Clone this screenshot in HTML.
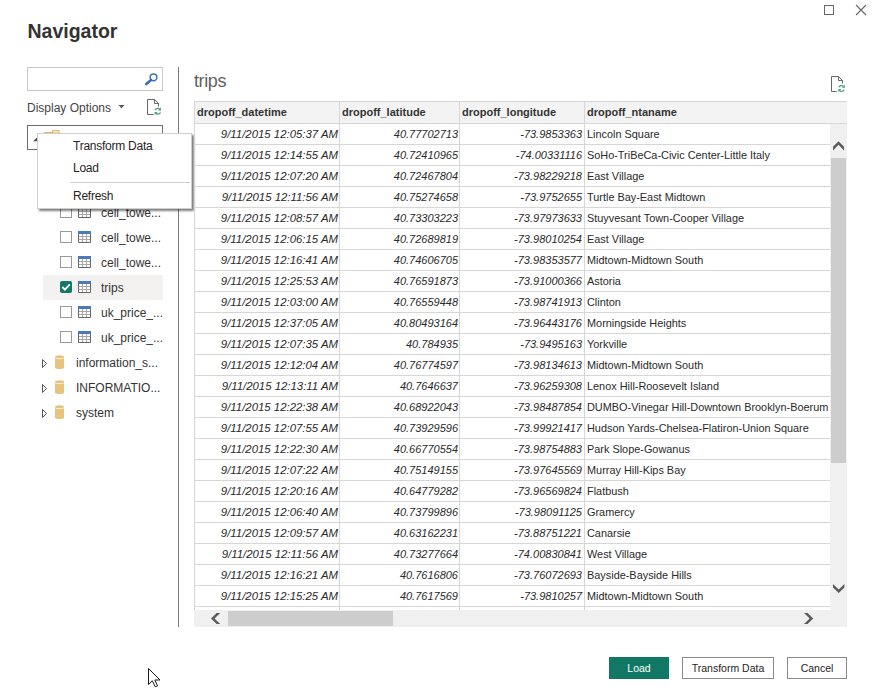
<!DOCTYPE html>
<html><head><meta charset="utf-8">
<style>
*{box-sizing:border-box;margin:0;padding:0}
html,body{width:873px;height:691px;overflow:hidden;background:#fff}
body{position:relative;font-family:"Liberation Sans",sans-serif;color:#252423}
.a{position:absolute;white-space:nowrap}
.t{position:absolute;white-space:nowrap;line-height:16px;height:16px}
/* table */
.hdr{position:absolute;left:194px;top:101px;width:653px;height:23px;background:#f3f3f3;border-top:1px solid #d6d6d6;border-bottom:1px solid #d6d6d6;border-left:1px solid #d6d6d6}
.hdr span{position:absolute;top:3px;font-weight:bold;font-size:11px;line-height:14px;color:#333}
.vl{position:absolute;top:101px;width:1px;height:509px;background:#d6d6d6}
.hl{position:absolute;left:194px;width:636px;height:1px;background:#d6d6d6}
.r{position:absolute;left:194px;width:636px;height:21px;font-size:11.4px;line-height:14px;color:#2a2a2a}
.r span{position:absolute;top:3px;white-space:nowrap}
.c1{right:493px;font-style:italic}
.c2{right:373px;font-style:italic;font-size:11px}
.c3{right:249px;font-style:italic;font-size:11px}
.c4{left:392px;font-size:10.9px}
/* tree */
.tr{position:absolute;font-size:12px;line-height:16px;color:#333;white-space:nowrap}
.cb{position:absolute;width:12px;height:12px;border:1px solid #9a9a9a;background:#fff}
.btn{position:absolute;top:657px;height:22px;font-size:10.5px;line-height:20px;text-align:center;border:1px solid #8a8a8a;background:#fff;color:#252423}
</style></head><body>

<!-- title -->
<div class="a" style="left:27.5px;top:20.5px;font-size:19.5px;line-height:20px;font-weight:bold;color:#333">Navigator</div>

<!-- window controls -->
<svg class="a" style="left:820px;top:0px" width="53" height="22" viewBox="820 0 53 22">
<rect x="824.5" y="5.5" width="9" height="9" fill="none" stroke="#666" stroke-width="1"/>
<path d="M856 5 L866 15 M866 5 L856 15" stroke="#666" stroke-width="1.1" fill="none"/>
</svg>

<!-- search box -->
<div class="a" style="left:27px;top:67px;width:136px;height:24px;border:1px solid #c8c8c8"></div>
<svg class="a" style="left:140px;top:70px" width="20" height="18" viewBox="140 70 20 18">
<circle cx="153.5" cy="77.3" r="3.4" fill="none" stroke="#3a70b3" stroke-width="1.5"/>
<path d="M151 80 L146.3 84" stroke="#3a6db0" stroke-width="2.6" stroke-linecap="round"/>
</svg>

<!-- display options -->
<div class="t" style="left:27px;top:100px;font-size:12px;color:#444">Display Options</div>
<svg class="a" style="left:116px;top:102px" width="10" height="8" viewBox="116 102 10 8">
<path d="M118.5 105 H124.5 L121.5 108.2 Z" fill="#555"/>
</svg>

<!-- doc refresh icon left -->
<svg class="a" style="left:145px;top:97px" width="20" height="20" viewBox="145 97 20 20">
<path d="M153.5 114.5 H147.5 V99.5 H154.5 L158.5 103.5 V106.5 M154.5 99.5 V103.5 H158.5" fill="none" stroke="#666" stroke-width="1"/>
<path d="M155 110 C156 108.3 158.5 107.8 160 109.2" fill="none" stroke="#459d7e" stroke-width="1.2"/>
<path d="M161 107.6 V110.6 H158 Z" fill="#459d7e"/>
<path d="M160.6 112.5 C159.6 114.2 157.1 114.7 155.6 113.3" fill="none" stroke="#459d7e" stroke-width="1.2"/>
<path d="M154.6 114.9 V111.9 H157.6 Z" fill="#459d7e"/>
</svg>

<!-- divider -->
<div class="a" style="left:178px;top:67px;width:1px;height:560px;background:#7a7a7a"></div>

<!-- tree -->
<div class="a" style="left:27px;top:125px;width:136px;height:25px;border:1px solid #6d6d6d"></div>
<svg class="a" style="left:30px;top:127px" width="32" height="22" viewBox="30 127 32 22">
<path d="M37.2 137.3 V141.2 H33.3 Z" fill="#444"/>
<path d="M44.5 140 V132.5 H52.5" fill="none" stroke="#e3b463" stroke-width="1"/><rect x="52.5" y="130.5" width="6.5" height="2.5" fill="#fbeed4" stroke="#e3b463" stroke-width="1"/>
</svg>

<!-- tree rows with checkboxes -->
<div class="a" style="left:43px;top:275px;width:120px;height:25px;background:#f3f2f1"></div>

<div class="cb" style="left:60px;top:206px"></div>
<div class="cb" style="left:60px;top:231px"></div>
<div class="cb" style="left:60px;top:256px"></div>
<div class="a" style="left:60px;top:281px;width:12px;height:12px;border-radius:2px;background:#117865"></div>
<svg class="a" style="left:60px;top:281px" width="12" height="12" viewBox="0 0 12 12"><path d="M2.3 6 L4.9 8.6 L9.8 3.4" fill="none" stroke="#fff" stroke-width="1.8"/></svg>
<div class="cb" style="left:60px;top:306px"></div>
<div class="cb" style="left:60px;top:331px"></div>

<svg class="a" style="left:0;top:0" width="180" height="440" viewBox="0 0 180 440">
<defs>
<g id="tbl">
<rect x="0" y="0" width="13" height="12" fill="#fff"/>
<rect x="0" y="0" width="13" height="3" fill="#4a7ab8"/>
<path d="M0.5 3 V11.5 H12.5 V3" fill="none" stroke="#666" stroke-width="1"/>
<path d="M4.5 3 V11 M8.5 3 V11 M1 5.5 H12 M1 8.5 H12" fill="none" stroke="#a8a8a8" stroke-width="1"/>
</g>
<g id="db">
<ellipse cx="4.5" cy="1.5" rx="4.5" ry="1.5" fill="#e6c37f"/><path d="M0 2.9 C1.5 4.3 7.5 4.3 9 2.9 V12.5 C9 14.3 0 14.3 0 12.5 Z" fill="#e6c37f"/>
</g>
<g id="exp"><path d="M0.5 0.5 L4.5 4.5 L0.5 8.5 Z" fill="#fff" stroke="#555" stroke-width="1"/></g>
</defs>
<use href="#tbl" x="78" y="206"/>
<use href="#tbl" x="78" y="231"/>
<use href="#tbl" x="78" y="256"/>
<use href="#tbl" x="78" y="281"/>
<use href="#tbl" x="78" y="306"/>
<use href="#tbl" x="78" y="331"/>
<use href="#exp" x="42" y="359"/>
<use href="#exp" x="42" y="384"/>
<use href="#exp" x="42" y="409"/>
<use href="#db" x="55" y="355.2"/>
<use href="#db" x="55" y="380.2"/>
<use href="#db" x="55" y="405.2"/>
</svg>

<div class="tr" style="left:101px;top:205px">cell_towe...</div>
<div class="tr" style="left:101px;top:230px">cell_towe...</div>
<div class="tr" style="left:101px;top:255px">cell_towe...</div>
<div class="tr" style="left:101px;top:280px">trips</div>
<div class="tr" style="left:101px;top:305px">uk_price_...</div>
<div class="tr" style="left:101px;top:330px">uk_price_...</div>
<div class="tr" style="left:76px;top:355px">information_s...</div>
<div class="tr" style="left:76px;top:380px">INFORMATIO...</div>
<div class="tr" style="left:76px;top:405px">system</div>

<!-- context menu -->
<div class="a" style="left:37px;top:133px;width:155px;height:76px;background:#fff;border:1px solid #cfcfcf;box-shadow:2px 2px 2px rgba(0,0,0,0.5)">
</div>
<div class="tr" style="left:73px;top:138px;letter-spacing:-0.25px;color:#252423">Transform Data</div>
<div class="tr" style="left:73px;top:160px;letter-spacing:-0.25px;color:#252423">Load</div>
<div class="a" style="left:70px;top:182px;width:120px;height:1px;background:#d0d0d0"></div>
<div class="tr" style="left:73px;top:188px;letter-spacing:-0.25px;color:#252423">Refresh</div>

<!-- right title -->
<div class="a" style="left:194px;top:71px;font-size:18px;line-height:20px;letter-spacing:-0.4px;color:#606060">trips</div>
<svg class="a" style="left:829px;top:74px" width="20" height="20" viewBox="829 74 20 20">
<path d="M836.7 91.5 H831.5 V76.5 H838.5 L842.5 80.5 V83.5 M838.5 76.5 V80.5 H842.5" fill="none" stroke="#666" stroke-width="1"/>
<path d="M838.8 87.2 C839.8 85.5 842.3 85 843.8 86.4" fill="none" stroke="#459d7e" stroke-width="1.2"/>
<path d="M844.8 84.8 V87.8 H841.8 Z" fill="#459d7e"/>
<path d="M844.4 89.7 C843.4 91.4 840.9 91.9 839.4 90.5" fill="none" stroke="#459d7e" stroke-width="1.2"/>
<path d="M838.4 92.1 V89.1 H841.4 Z" fill="#459d7e"/>
</svg>

<!-- table -->
<div class="hdr">
<span style="left:2px">dropoff_datetime</span>
<span style="left:147px">dropoff_latitude</span>
<span style="left:267px">dropoff_longitude</span>
<span style="left:392px">dropoff_ntaname</span>
</div>
<div class="a" style="left:194px;top:101px;width:1px;height:509px;background:#d6d6d6"></div>
<div class="vl" style="left:339px"></div>
<div class="vl" style="left:459px"></div>
<div class="vl" style="left:584px"></div>
<div class="hl" style="top:144px"></div>
<div class="hl" style="top:165px"></div>
<div class="hl" style="top:186px"></div>
<div class="hl" style="top:207px"></div>
<div class="hl" style="top:228px"></div>
<div class="hl" style="top:249px"></div>
<div class="hl" style="top:270px"></div>
<div class="hl" style="top:291px"></div>
<div class="hl" style="top:312px"></div>
<div class="hl" style="top:333px"></div>
<div class="hl" style="top:354px"></div>
<div class="hl" style="top:375px"></div>
<div class="hl" style="top:396px"></div>
<div class="hl" style="top:417px"></div>
<div class="hl" style="top:438px"></div>
<div class="hl" style="top:459px"></div>
<div class="hl" style="top:480px"></div>
<div class="hl" style="top:501px"></div>
<div class="hl" style="top:522px"></div>
<div class="hl" style="top:543px"></div>
<div class="hl" style="top:564px"></div>
<div class="hl" style="top:585px"></div>
<div class="hl" style="top:606px"></div>
<div class="a" style="left:195px;top:124px;width:635px;height:486px;overflow:hidden">
<div style="position:absolute;left:-194px;top:-124px;width:1024px;height:700px">
<div class="r" style="top:124px"><span class="c1">9/11/2015 12:05:37 AM</span><span class="c2">40.77702713</span><span class="c3">-73.9853363</span><span class="c4">Lincoln Square</span></div>
<div class="r" style="top:145px"><span class="c1">9/11/2015 12:14:55 AM</span><span class="c2">40.72410965</span><span class="c3">-74.00331116</span><span class="c4">SoHo-TriBeCa-Civic Center-Little Italy</span></div>
<div class="r" style="top:166px"><span class="c1">9/11/2015 12:07:20 AM</span><span class="c2">40.72467804</span><span class="c3">-73.98229218</span><span class="c4">East Village</span></div>
<div class="r" style="top:187px"><span class="c1">9/11/2015 12:11:56 AM</span><span class="c2">40.75274658</span><span class="c3">-73.9752655</span><span class="c4">Turtle Bay-East Midtown</span></div>
<div class="r" style="top:208px"><span class="c1">9/11/2015 12:08:57 AM</span><span class="c2">40.73303223</span><span class="c3">-73.97973633</span><span class="c4">Stuyvesant Town-Cooper Village</span></div>
<div class="r" style="top:229px"><span class="c1">9/11/2015 12:06:15 AM</span><span class="c2">40.72689819</span><span class="c3">-73.98010254</span><span class="c4">East Village</span></div>
<div class="r" style="top:250px"><span class="c1">9/11/2015 12:16:41 AM</span><span class="c2">40.74606705</span><span class="c3">-73.98353577</span><span class="c4">Midtown-Midtown South</span></div>
<div class="r" style="top:271px"><span class="c1">9/11/2015 12:25:53 AM</span><span class="c2">40.76591873</span><span class="c3">-73.91000366</span><span class="c4">Astoria</span></div>
<div class="r" style="top:292px"><span class="c1">9/11/2015 12:03:00 AM</span><span class="c2">40.76559448</span><span class="c3">-73.98741913</span><span class="c4">Clinton</span></div>
<div class="r" style="top:313px"><span class="c1">9/11/2015 12:37:05 AM</span><span class="c2">40.80493164</span><span class="c3">-73.96443176</span><span class="c4">Morningside Heights</span></div>
<div class="r" style="top:334px"><span class="c1">9/11/2015 12:07:35 AM</span><span class="c2">40.784935</span><span class="c3">-73.9495163</span><span class="c4">Yorkville</span></div>
<div class="r" style="top:355px"><span class="c1">9/11/2015 12:12:04 AM</span><span class="c2">40.76774597</span><span class="c3">-73.98134613</span><span class="c4">Midtown-Midtown South</span></div>
<div class="r" style="top:376px"><span class="c1">9/11/2015 12:13:11 AM</span><span class="c2">40.7646637</span><span class="c3">-73.96259308</span><span class="c4">Lenox Hill-Roosevelt Island</span></div>
<div class="r" style="top:397px"><span class="c1">9/11/2015 12:22:38 AM</span><span class="c2">40.68922043</span><span class="c3">-73.98487854</span><span class="c4">DUMBO-Vinegar Hill-Downtown Brooklyn-Boerum Hill</span></div>
<div class="r" style="top:418px"><span class="c1">9/11/2015 12:07:55 AM</span><span class="c2">40.73929596</span><span class="c3">-73.99921417</span><span class="c4">Hudson Yards-Chelsea-Flatiron-Union Square</span></div>
<div class="r" style="top:439px"><span class="c1">9/11/2015 12:22:30 AM</span><span class="c2">40.66770554</span><span class="c3">-73.98754883</span><span class="c4">Park Slope-Gowanus</span></div>
<div class="r" style="top:460px"><span class="c1">9/11/2015 12:07:22 AM</span><span class="c2">40.75149155</span><span class="c3">-73.97645569</span><span class="c4">Murray Hill-Kips Bay</span></div>
<div class="r" style="top:481px"><span class="c1">9/11/2015 12:20:16 AM</span><span class="c2">40.64779282</span><span class="c3">-73.96569824</span><span class="c4">Flatbush</span></div>
<div class="r" style="top:502px"><span class="c1">9/11/2015 12:06:40 AM</span><span class="c2">40.73799896</span><span class="c3">-73.98091125</span><span class="c4">Gramercy</span></div>
<div class="r" style="top:523px"><span class="c1">9/11/2015 12:09:57 AM</span><span class="c2">40.63162231</span><span class="c3">-73.88751221</span><span class="c4">Canarsie</span></div>
<div class="r" style="top:544px"><span class="c1">9/11/2015 12:11:56 AM</span><span class="c2">40.73277664</span><span class="c3">-74.00830841</span><span class="c4">West Village</span></div>
<div class="r" style="top:565px"><span class="c1">9/11/2015 12:16:21 AM</span><span class="c2">40.7616806</span><span class="c3">-73.76072693</span><span class="c4">Bayside-Bayside Hills</span></div>
<div class="r" style="top:586px"><span class="c1">9/11/2015 12:15:25 AM</span><span class="c2">40.7617569</span><span class="c3">-73.9810257</span><span class="c4">Midtown-Midtown South</span></div>
</div>
</div>

<!-- vertical scrollbar -->
<div class="a" style="left:830px;top:124px;width:17px;height:503px;background:#f0f0f0"></div>
<div class="a" style="left:831px;top:158px;width:15px;height:305px;background:#cdcdcd"></div>
<svg class="a" style="left:830px;top:124px" width="17" height="486" viewBox="830 124 17 486">
<path d="M833 146.8 L838.5 141.2 L844 146.8 V150.4 L838.5 144.8 L833 150.4 Z" fill="#5a5a5a"/>
<path d="M833 584 L838.7 589.6 L844.4 584 V587.5 L838.7 593.1 L833 587.5 Z" fill="#5a5a5a"/>
</svg>
<!-- horizontal scrollbar -->
<div class="a" style="left:194px;top:610px;width:636px;height:17px;background:#f0f0f0"></div>
<div class="a" style="left:228px;top:611px;width:165px;height:15px;background:#cdcdcd"></div>
<svg class="a" style="left:194px;top:610px" width="636" height="17" viewBox="194 610 636 17">
<path d="M220.2 613 H216.7 L211 618.5 L216.7 624 H220.2 L214.5 618.5 Z" fill="#5a5a5a"/>
<path d="M804 613 H807.5 L813.2 618.5 L807.5 624 H804 L809.7 618.5 Z" fill="#5a5a5a"/>
</svg>

<!-- buttons -->
<div class="btn" style="left:609px;width:60px;background:#117865;border-color:#117865;color:#fff">Load</div>
<div class="btn" style="left:682px;width:92px">Transform Data</div>
<div class="btn" style="left:787px;width:60px">Cancel</div>

<!-- cursor -->
<svg class="a" style="left:145px;top:665px" width="20" height="26" viewBox="145 665 20 26">
<path d="M148.5 668.5 V684.5 L152.3 680.8 L155.3 686.8 L157.6 685.8 L154.8 680 H160 Z" fill="#fff" stroke="#1a1a1a" stroke-width="1" stroke-linejoin="round"/>
</svg>

</body></html>
